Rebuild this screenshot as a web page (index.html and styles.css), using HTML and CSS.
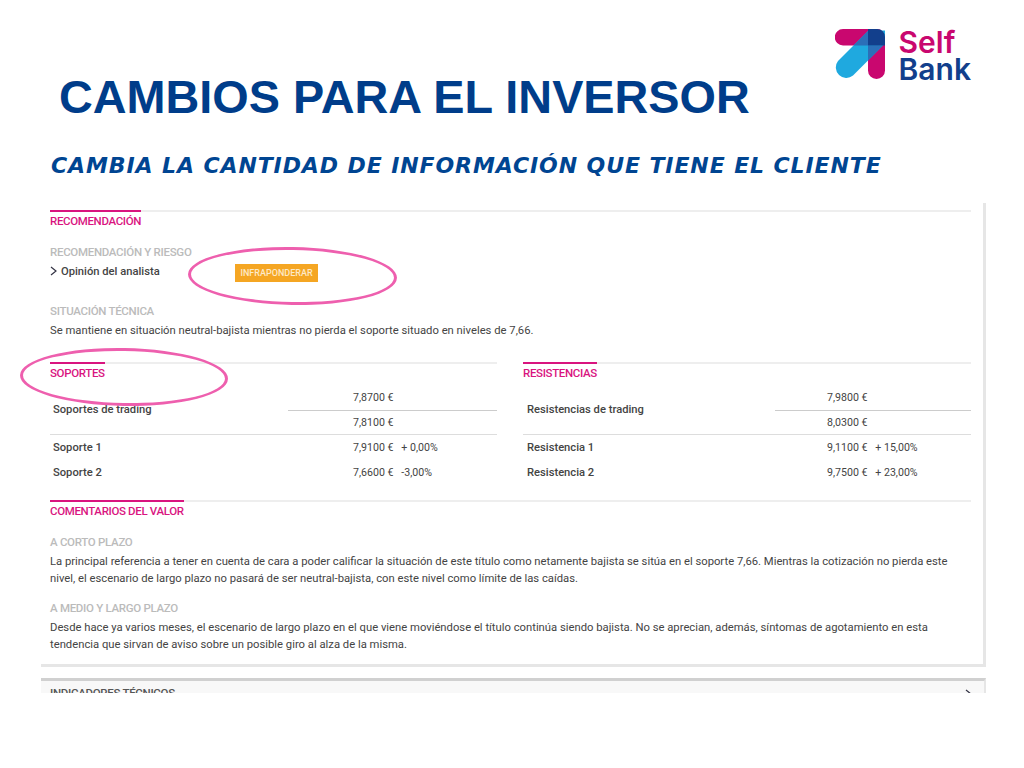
FILE: index.html
```html
<html lang="es">

<head>
	<meta charset="UTF-8">
	<title>Cambios para el inversor</title>
	<link rel="stylesheet" href="styles.css">
</head>

<body>
	<div class="slide">
		<header class="slide-head">
			<div class="titles">
				<h1>CAMBIOS PARA EL INVERSOR</h1>
				<h2>CAMBIA LA CANTIDAD DE INFORMACIÓN QUE TIENE EL CLIENTE</h2>
			</div>
			<div class="logo">
				<svg class="logo-mark" width="50" height="50" viewBox="0 0 50 50">
					<path d="M8 0H42A8 8 0 0 1 50 8V41.500A8.500 8.500 0 0 1 33 41.500V16.500H8A8 8 0 0 1 8 0Z" fill="#c9076f" />
					<path d="M3 32L33.500 1.500H50V14.500L18 46.500A10.500 10.500 0 0 1 3 32Z" fill="#1fa9df" />
					<path d="M18.500 16.500L33 2V16.500Z" fill="#2b6fb8" />
					<path d="M33 16.500H48L33 31.500Z" fill="#2b6fb8" />
					<path d="M33 0H42A8 8 0 0 1 50 8V16.500H33Z" fill="#123f8c" />
				</svg>
				<div class="logo-text">
					<span class="logo-self">Self</span>
					<span class="logo-bank">Bank</span>
				</div>
			</div>
		</header>

		<div class="panel">
			<section class="block">
				<h3 class="heading"><span>RECOMENDACIÓN</span></h3>
				<h4 class="sub first">RECOMENDACIÓN Y RIESGO</h4>
				<div class="opinion">
					<svg class="chevron" width="7" height="10" viewBox="0 0 7 10">
						<path d="M1 1L6 5L1 9" fill="none" stroke="#334" stroke-width="1.2" />
					</svg>
					<span class="opinion-label">Opinión del analista</span>
					<span class="badge">INFRAPONDERAR</span>
				</div>
				<h4 class="sub tech">SITUACIÓN TÉCNICA</h4>
				<p class="text">Se mantiene en situación neutral-bajista mientras no pierda el soporte situado en niveles de 7,66.</p>
			</section>

			<div class="columns">
				<section class="block">
					<h3 class="heading"><span>SOPORTES</span></h3>
					<table class="levels">
						<tr>
							<th rowspan="2">Soportes de trading</th>
							<td class="split">7,8700 €</td>
						</tr>
						<tr class="end">
							<td>7,8100 €</td>
						</tr>
						<tr class="tall">
							<th>Soporte 1</th>
							<td>7,9100 €&nbsp;&nbsp; + 0,00%</td>
						</tr>
						<tr>
							<th>Soporte 2</th>
							<td>7,6600 €&nbsp;&nbsp; -3,00%</td>
						</tr>
					</table>
				</section>
				<section class="block">
					<h3 class="heading"><span>RESISTENCIAS</span></h3>
					<table class="levels levels-wide">
						<tr>
							<th rowspan="2">Resistencias de trading</th>
							<td class="split">7,9800 €</td>
						</tr>
						<tr class="end">
							<td>8,0300 €</td>
						</tr>
						<tr class="tall">
							<th>Resistencia 1</th>
							<td>9,1100 €&nbsp;&nbsp; + 15,00%</td>
						</tr>
						<tr>
							<th>Resistencia 2</th>
							<td>9,7500 €&nbsp;&nbsp; + 23,00%</td>
						</tr>
					</table>
				</section>
			</div>

			<section class="block comments">
				<h3 class="heading"><span>COMENTARIOS DEL VALOR</span></h3>
				<h4 class="sub first">A CORTO PLAZO</h4>
				<p class="text">La principal referencia a tener en cuenta de cara a poder calificar la situación de este título como netamente bajista se sitúa en el soporte 7,66. Mientras la cotización no pierda este nivel, el escenario de largo plazo no pasará de ser neutral-bajista, con este nivel como límite de las caídas.</p>
				<h4 class="sub">A MEDIO Y LARGO PLAZO</h4>
				<p class="text">Desde hace ya varios meses, el escenario de largo plazo en el que viene moviéndose el título continúa siendo bajista. No se aprecian, además, síntomas de agotamiento en esta tendencia que sirvan de aviso sobre un posible giro al alza de la misma.</p>
			</section>
		</div>

		<div class="panel-next">
			<span>INDICADORES TÉCNICOS</span>
			<svg class="chevron" width="7" height="10" viewBox="0 0 7 10">
				<path d="M1 1L6 5L1 9" fill="none" stroke="#334" stroke-width="1.2" />
			</svg>
		</div>

		<div class="ring ring-badge"></div>
		<div class="ring ring-soportes"></div>
	</div>
</body>

</html>
```

FILE: styles.css
```css
* {
	box-sizing: border-box;
}

body {
	margin: 0;
	background-color: #fff;
	font-family: Roboto, sans-serif;
}

.slide {
	position: relative;
	width: 1024px;
	height: 768px;
	overflow: hidden;
}

.slide-head {
	display: flex;
	justify-content: space-between;
	height: 203px;
	padding: 29px 53px 0 51px;
}

.titles {
	flex: 1;
	min-width: 0;
}

h1 {
	margin: 40px 0 0 8px;
	color: #003d8a;
	font-family: "Liberation Sans", sans-serif;
	font-size: 46.8px;
	font-weight: 700;
	line-height: 56px;
	white-space: nowrap;
}

h2 {
	margin: 28px 0 0;
	color: #004592;
	font-family: "DejaVu Sans", sans-serif;
	font-size: 22px;
	font-style: italic;
	font-weight: 700;
	letter-spacing: 0.9px;
	line-height: 26px;
	white-space: nowrap;
}

.logo {
	display: flex;
	flex: none;
	gap: 14px;
}

.logo-text {
	display: flex;
	flex-direction: column;
	font-family: Inter, sans-serif;
	font-size: 30px;
	font-weight: 600;
	line-height: 27px;
}

.logo-self {
	color: #c9076f;
}

.logo-bank {
	color: #123f8c;
}

.panel {
	width: 945px;
	height: 464px;
	margin-left: 41px;
	padding: 7px 12px 0 9px;
	border-right: 3px solid #e6e6e6;
	border-bottom: 3px solid #e6e6e6;
}

.heading {
	height: 21px;
	margin: 0;
	border-top: 2px solid #eeeeee;
	color: #d9147f;
	font-size: 11.5px;
	font-weight: 500;
	letter-spacing: -0.35px;
	line-height: 16px;
}

.heading span {
	display: inline-block;
	margin-top: -2px;
	padding-top: 1px;
	border-top: 2px solid #d9147f;
}

.sub {
	margin: 13px 0 0;
	color: #bbbbbb;
	font-size: 11.5px;
	font-weight: 500;
	letter-spacing: -0.3px;
	line-height: 16px;
}

.sub.tech {
	margin-top: 21px;
}

.text {
	max-width: 905px;
	margin: 3px 0 0;
	color: #444;
	font-size: 11.25px;
	line-height: 17px;
}

.opinion {
	display: flex;
	align-items: center;
	height: 22px;
	color: #444;
	font-size: 11.2px;
	font-weight: 500;
}

.chevron {
	flex: none;
}

.opinion-label {
	width: 174px;
	margin-left: 4px;
}

.badge {
	width: 83px;
	height: 18px;
	margin-top: 4px;
	background-color: #f5a623;
	color: #fde9c8;
	font-size: 9px;
	line-height: 18px;
	text-align: center;
}

.columns {
	display: grid;
	grid-template-columns: 447px 448px;
	gap: 26px;
	margin-top: 23px;
}

.levels {
	width: 100%;
	margin-top: 3px;
	border-collapse: collapse;
	table-layout: fixed;
	font-size: 10.6px;
	color: #444;
}

.levels th {
	width: 238px;
	height: 24px;
	padding: 0 0 0 3px;
	font-size: 11.2px;
	font-weight: 500;
	text-align: left;
}

.levels td {
	height: 24px;
	padding: 0 0 0 65px;
	white-space: nowrap;
}

.levels-wide th {
	width: 252px;
	padding-left: 4px;
}

.levels-wide td {
	padding-left: 52px;
}

.levels .split {
	border-bottom: 1px solid #cccccc;
}

.levels .end td,
.levels tr:first-child th {
	border-bottom: 1px solid #dddddd;
}

.levels .tall th,
.levels .tall td {
	height: 26px;
}

.comments {
	margin-top: 16px;
}

.panel-next {
	display: flex;
	justify-content: space-between;
	align-items: flex-start;
	width: 945px;
	height: 15px;
	margin: 11px 0 0 41px;
	padding: 4px 12px 0 9px;
	overflow: hidden;
	background-color: #f8f8f8;
	border-top: 3px solid #d0d0d0;
	border-right: 2px solid #e6e6e6;
	color: #555;
	font-size: 11.5px;
	font-weight: 500;
	letter-spacing: -0.3px;
	line-height: 16px;
}

.panel-next .chevron {
	margin-top: 4px;
}

.ring {
	position: absolute;
	border: 3px solid #ee5fae;
	border-radius: 50%;
	transform: rotate(1deg);
}

.ring-badge {
	left: 188px;
	top: 247px;
	width: 209px;
	height: 58px;
}

.ring-soportes {
	left: 20px;
	top: 348px;
	width: 208px;
	height: 58px;
}
```
